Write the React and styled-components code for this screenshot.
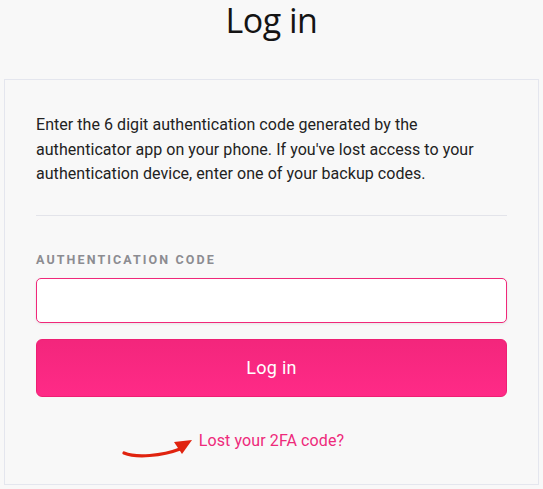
import React from "react";
import styled, { createGlobalStyle } from "styled-components";

const Global = createGlobalStyle`
  html, body { margin: 0; padding: 0; background: #f8f8f8; }
  body { font-family: Roboto, "Liberation Sans", sans-serif; }
  * { box-sizing: border-box; }
`;

const Page = styled.div`
  width: 543px;
  height: 489px;
  padding: 0 4px 0 4px;
  display: flex;
  flex-direction: column;
  overflow: hidden;
`;

const Title = styled.h1`
  margin: 0;
  height: 79px;
  padding-top: 0;
  text-align: center;
  font-family: "Open Sans", "Noto Sans", sans-serif;
  font-weight: 400;
  font-size: 34px;
  line-height: 40px;
  letter-spacing: -0.5px;
  color: #141414;
`;

const Card = styled.div`
  width: 535px;
  height: 406px;
  border: 1px solid #e4e6ee;
  background: #f8f8f8;
  padding: 33px 31px 0 31px;
  display: flex;
  flex-direction: column;
`;

const Intro = styled.p`
  margin: 0;
  font-size: 16px;
  line-height: 24.5px;
  color: #222;
  letter-spacing: 0.05px;
`;

const Divider = styled.hr`
  margin: 28px 0 0 0;
  border: 0;
  border-top: 1px solid #e3e4ea;
`;

const Label = styled.label`
  margin-top: 37px;
  font-size: 12.5px;
  font-weight: 700;
  letter-spacing: 2.1px;
  color: #8c8c91;
  line-height: 14px;
  text-transform: uppercase;
`;

const Input = styled.input`
  margin-top: 11px;
  height: 45px;
  width: 100%;
  background: #fff;
  border: 1px solid #f0287a;
  border-radius: 5px;
  box-shadow: 0 1px 3px rgba(0, 0, 0, 0.08);
  outline: none;
  font-size: 16px;
  padding: 0 12px;
`;

const Button = styled.button`
  margin-top: 16px;
  height: 58px;
  width: 100%;
  border: 1px solid #ee1f73;
  border-radius: 6px;
  background: linear-gradient(#f3267c, #ff2a87);
  color: #fff;
  font-family: Roboto, "Liberation Sans", sans-serif;
  font-size: 18px;
  letter-spacing: 0.3px;
  cursor: pointer;
`;

const LinkRow = styled.div`
  position: relative;
  margin-top: 34px;
  text-align: center;
`;

const Lost = styled.a`
  font-size: 16px;
  line-height: 20px;
  color: #ee2a7b;
  text-decoration: none;
  letter-spacing: 0.1px;
`;

const Arrow = styled.svg`
  position: absolute;
  left: 86px;
  top: 6px;
`;

export default function App() {
  return (
    <>
      <Global />
      <Page>
        <Title>Log in</Title>
        <Card>
          <Intro>
            Enter the 6 digit authentication code generated by the authenticator app on your
            phone. If you've lost access to your authentication device, enter one of your backup
            codes.
          </Intro>
          <Divider />
          <Label>Authentication code</Label>
          <Input />
          <Button>Log in</Button>
          <LinkRow>
            <Lost href="#">Lost your 2FA code?</Lost>
            <Arrow width="80" height="24" viewBox="0 0 80 24">
              <path
                d="M2 16 C 14 21, 40 19, 58 12"
                fill="none"
                stroke="#e0230f"
                strokeWidth="3.2"
                strokeLinecap="round"
              />
              <path d="M70 3 L52 5 L60 17 Z" fill="#e0230f" />
            </Arrow>
          </LinkRow>
        </Card>
      </Page>
    </>
  );
}
